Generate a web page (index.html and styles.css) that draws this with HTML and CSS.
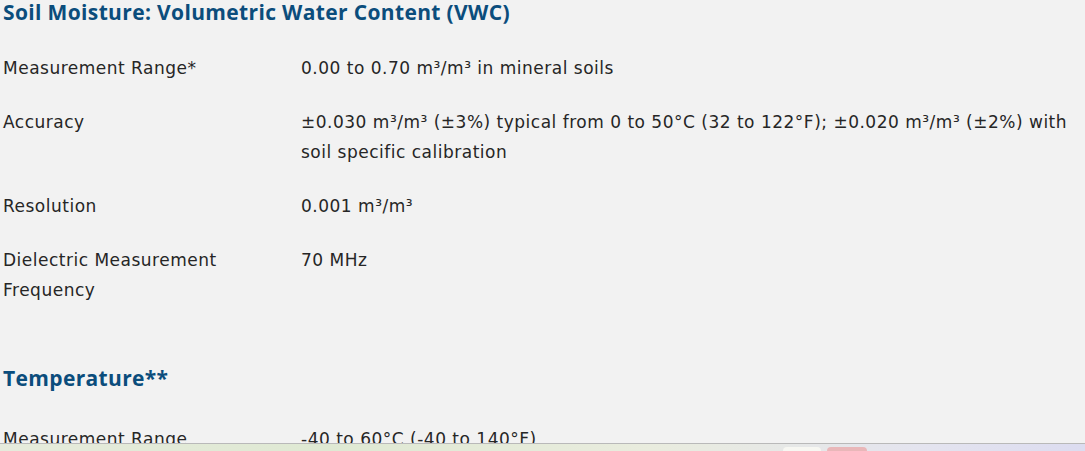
FILE: index.html
```html
<!DOCTYPE html>
<html lang="en">
<head>
<meta charset="utf-8">
<title>Specifications</title>
<link rel="stylesheet" href="styles.css">
</head>
<body>
<main class="specs">
  <section class="group">
    <h2 class="group-title">Soil Moisture: Volumetric Water Content (VWC)</h2>
    <dl class="spec-list">
      <dt>Measurement Range*</dt>
      <dd>0.00 to 0.70 m³/m³ in mineral soils</dd>
      <dt>Accuracy</dt>
      <dd>±0.030 m³/m³ (±3%) typical from 0 to 50°C (32 to 122°F); ±0.020 m³/m³ (±2%) with soil specific calibration</dd>
      <dt>Resolution</dt>
      <dd>0.001 m³/m³</dd>
      <dt>Dielectric Measurement Frequency</dt>
      <dd>70 MHz</dd>
    </dl>
  </section>
  <section class="group group-temp">
    <h2 class="group-title">Temperature**</h2>
    <dl class="spec-list">
      <dt>Measurement Range</dt>
      <dd>-40 to 60°C (-40 to 140°F)</dd>
    </dl>
  </section>
</main>
<div class="taskbar">
  <span class="tb-chip tb-white"></span>
  <span class="tb-chip tb-pink"></span>
</div>
</body>
</html>
```
FILE: styles.css
```css
html, body {
  margin: 0;
  padding: 0;
  background: #f2f2f2;
  height: 100%;
  overflow: hidden;
}
body {
  font-family: "DejaVu Sans", "Noto Sans", sans-serif;
  color: #262626;
}
.specs {
  padding: 0 0 0 3px;
}
.group-title {
  margin: 0;
  font-family: "Open Sans", "Noto Sans", sans-serif;
  font-size: 21px;
  line-height: 24px;
  font-weight: 700;
  letter-spacing: 0.35px;
  color: #0b4d7c;
}
.spec-list {
  display: grid;
  grid-template-columns: 298px 1fr;
  row-gap: 24px;
  margin: 29px 0 0 0;
  font-size: 17px;
  line-height: 30px;
  letter-spacing: 0.5px;
}
.spec-list dt, .spec-list dd {
  margin: 0;
}
.spec-list dt {
  padding-right: 60px;
}
.spec-list dd {
  max-width: 775px;
}
.group-temp {
  margin-top: 61px;
}
.group-temp .spec-list {
  margin-top: 34px;
}
.taskbar {
  position: fixed;
  left: 0;
  right: 0;
  bottom: 0;
  height: 7px;
  border-top: 1px solid #b9b9b9;
  background: linear-gradient(90deg, #e6ebdc 0%, #dfe9d3 30%, #e9ecde 60%, #e4e4ef 85%, #dcdcf0 100%);
  display: flex;
  gap: 6px;
  padding-left: 783px;
  align-items: flex-end;
}
.tb-chip {
  display: block;
  height: 4px;
  border-radius: 4px 4px 0 0;
}
.tb-white {
  width: 38px;
  background: #f7f7f2;
}
.tb-pink {
  width: 40px;
  background: #e9b7b9;
}
```
